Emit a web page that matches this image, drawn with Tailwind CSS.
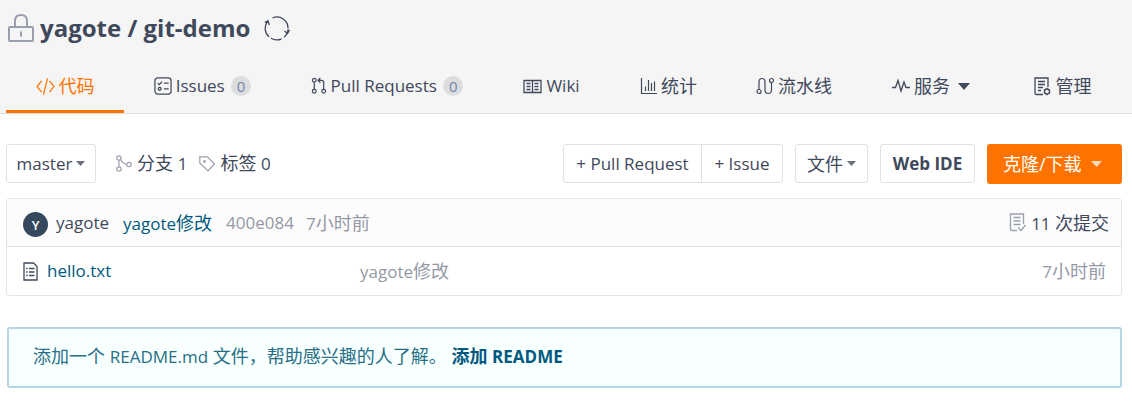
<!DOCTYPE html>
<html lang="zh-CN">
<head>
<meta charset="utf-8">
<meta name="viewport" content="width=device-width, initial-scale=1">
<title>yagote / git-demo</title>
<script src="https://cdn.jsdelivr.net/npm/@tailwindcss/browser@4"></script>
</head>
<body class="bg-white font-['Open_Sans','Noto_Sans_CJK_SC',sans-serif] text-[17px] leading-6 text-[#40485b]">
<header class="border-b border-[#dcddde] bg-[#f5f5f5] px-[6px]">
  <div class="flex h-14 items-center pl-[2px]">
    <svg class="h-7 w-[26px] shrink-0" viewBox="0 0 26 28" fill="none" stroke="#9a9fb0" stroke-width="2" aria-hidden="true"><rect x="1" y="13" width="24" height="14" rx="1"/><path d="M7 13V7Q7 1 13 1T19 7V13M13 17.500v5"/></svg>
    <h1 class="ml-[6px] text-2xl font-bold whitespace-nowrap"><a href="#">yagote</a> / <a href="#">git-demo</a></h1>
    <button type="button" class="ml-[14px]" aria-label="同步">
      <svg class="size-[26px]" viewBox="0 0 26 26" fill="none" stroke="#40485b" stroke-width="1.300" aria-hidden="true"><path d="M8.500 3A11 11 0 0 1 24 13.500M17.500 23.800A11.200 11.200 0 0 1 7 23.200M5 21.800A11.200 11.200 0 0 1 3.500 6.500M24 14.500A11 11 0 0 1 20 22.300M.8 7.500l3.200-1.700 1.300 4.200M20.500 16l3 2.500 2-3.800"/></svg>
    </button>
  </div>
  <nav class="flex h-[57px] whitespace-nowrap" aria-label="仓库">
    <a href="#" class="flex w-[118px] items-center justify-center gap-1 border-b-3 border-[#fe7300] pt-[6px] text-lg text-[#fe7300]" aria-current="page">
      <svg class="size-[19px] shrink-0" viewBox="0 0 19 19" fill="none" stroke="currentColor" stroke-width="1.200" aria-hidden="true"><path d="M5.500 4L1 9.500 5.500 15M13.500 4L18 9.500 13.500 15M11.500 1.500l-4 16"/></svg>代码</a>
    <a href="#" class="flex w-[157px] items-center justify-center gap-1 pt-[3px]">
      <svg class="size-[18px] shrink-0" viewBox="0 0 19 19" fill="none" stroke="currentColor" stroke-width="1.300" aria-hidden="true"><rect x="1" y="1" width="17" height="17" rx="3"/><path d="M4 6.500l1.500 1.500L8.500 5M10.500 6.500h5M10.500 12.500h5"/><circle cx="6" cy="12.500" r="1.500"/></svg>Issues<span class="ml-[2px] rounded-full bg-[#dcddde] px-[6px] text-[15px] leading-5 text-[#7386a5]">0</span></a>
    <a href="#" class="flex w-[212px] items-center justify-center gap-1 pt-[3px]">
      <svg class="h-[18px] w-4 shrink-0" viewBox="0 0 17 19" fill="none" stroke="currentColor" stroke-width="1.300" aria-hidden="true"><circle cx="3.500" cy="3.500" r="2"/><circle cx="3.500" cy="15" r="2"/><circle cx="13.500" cy="15" r="2"/><path d="M3.500 5.500V13M7.500 3.500H11Q13.500 3.500 13.500 6v7M10 1L7.500 3.500 10 6"/></svg>Pull Requests<span class="ml-[2px] rounded-full bg-[#dcddde] px-[6px] text-[15px] leading-5 text-[#7386a5]">0</span></a>
    <a href="#" class="flex w-[117px] items-center justify-center gap-1 pt-[3px]">
      <svg class="h-[15px] w-[19px] shrink-0" viewBox="0 0 19 15" fill="none" stroke="currentColor" stroke-width="1.300" aria-hidden="true"><path d="M1 1.500h17v12H1zM9.500 1.500v12M3.500 4.500h4M3.500 7.500h4M3.500 10.500h4M11.500 4.500h4M11.500 7.500h4M11.500 10.500h4"/></svg>Wiki</a>
    <a href="#" class="flex w-[117px] items-center justify-center gap-1 pt-[3px] text-lg">
      <svg class="h-[18px] w-[17px] shrink-0" viewBox="0 0 17 18" fill="none" stroke="currentColor" stroke-width="1.200" aria-hidden="true"><path d="M1.500 1v15.500H17M5.500 9.500V14M8.500 3v11M11.500 6v8M14.500 4.500V14"/></svg>统计</a>
    <a href="#" class="flex w-[134px] items-center justify-center gap-1 pt-[3px] text-lg">
      <svg class="size-[18px] shrink-0" viewBox="0 0 18 18" fill="none" stroke="currentColor" stroke-width="1.200" aria-hidden="true"><circle cx="3" cy="14.500" r="2"/><circle cx="15.500" cy="3.500" r="2"/><path d="M3 12.500V5Q3 1.500 6 1.500T9 5v8Q9 16.500 12.200 16.500T15.500 13V5.500"/></svg>流水线</a>
    <button type="button" class="flex w-[140px] items-center justify-center gap-1 pt-[3px] text-lg">
      <svg class="size-[18px] shrink-0" viewBox="0 0 18 18" fill="none" stroke="currentColor" stroke-width="1.300" aria-hidden="true"><path d="M0 10.500h3.500L6 3.500 9 14l3-9 2 5.500h4"/></svg>服务
      <svg class="ml-1 h-[7px] w-3" viewBox="0 0 12 7" fill="currentColor" aria-hidden="true"><path d="M0 0h12L6 7z"/></svg></button>
    <a href="#" class="flex w-[122px] items-center justify-center gap-1 pt-[3px] text-lg">
      <svg class="size-[19px] shrink-0" viewBox="0 0 19 19" fill="none" stroke="currentColor" stroke-width="1.300" aria-hidden="true"><path d="M10 17.500H3.500Q2 17.500 2 16V1h13v9M5 4.500h7M5 7.500h7M5 10.500h5M5 13.500h3"/><circle cx="14" cy="14.500" r="2.500"/><path d="M14 10.800v1.200M14 17v1.200M10.800 12.700l1 .6M16.200 15.700l1 .6M10.800 16.300l1-.6M16.200 13.300l1-.6"/></svg>管理</a>
  </nav>
</header>
<main class="px-[6px]">
  <div class="mt-[30px] flex h-10 items-start pr-1 whitespace-nowrap">
    <button type="button" class="flex h-[39px] w-[90px] items-center justify-center gap-1 rounded-[3px] border border-[#dce3e8]">master
      <svg class="h-[5px] w-[9px]" viewBox="0 0 9 5" fill="#6b7080" aria-hidden="true"><path d="M0 0h9L4.500 5z"/></svg></button>
    <a href="#" class="ml-5 flex h-[39px] items-center gap-[5px] text-lg">
      <svg class="h-[17px] w-4 shrink-0" viewBox="0 0 16 17" fill="none" stroke="#9a9fb0" stroke-width="1.200" aria-hidden="true"><circle cx="3" cy="3" r="2.200"/><circle cx="3" cy="14" r="2.200"/><circle cx="13" cy="9.500" r="2.200"/><path d="M3 5.200v6.600M4.500 4.500Q6.500 8.500 10.800 9.300"/></svg><span>分支 <span class="text-[17px]">1</span></span></a>
    <a href="#" class="ml-3 flex h-[39px] items-center gap-[5px] text-lg">
      <svg class="size-4 shrink-0" viewBox="0 0 16 16" fill="none" stroke="#9a9fb0" stroke-width="1.200" aria-hidden="true"><path d="M.8.800H8.500L15.400 8 9 15 .8 7z"/><circle cx="5.500" cy="5.500" r=".8"/></svg><span>标签 <span class="text-[17px]">0</span></span></a>
    <div class="ml-auto flex h-[39px] rounded-[3px] border border-[#dce3e8]">
      <button type="button" class="w-[138px] border-r border-[#dce3e8]">+ Pull Request</button>
      <button type="button" class="w-20">+ Issue</button>
    </div>
    <button type="button" class="ml-3 flex h-[39px] w-[73px] items-center justify-center gap-1 rounded-[3px] border border-[#dce3e8] text-lg">文件<svg class="h-[5px] w-[9px]" viewBox="0 0 9 5" fill="#6b7080" aria-hidden="true"><path d="M0 0h9L4.500 5z"/></svg></button>
    <button type="button" class="ml-3 h-[39px] w-[95px] rounded-[3px] border border-[#dce3e8] font-bold">Web IDE</button>
    <button type="button" class="ml-3 flex h-10 w-[135px] items-center gap-[9px] rounded-[3px] bg-[#fe7300] pl-4 text-lg text-white">克隆/下载<svg class="h-[6px] w-[11px]" viewBox="0 0 11 6" fill="#ffdcbf" aria-hidden="true"><path d="M0 0h11L5.500 6z"/></svg></button>
  </div>

  <section class="mt-[14px] mr-1 rounded-[4px] border border-[#dfe5ea] whitespace-nowrap" aria-label="文件列表">
    <div class="flex h-12 items-center rounded-t-[4px] border-b border-[#dce3e8] bg-[#fcfcfc] pr-3 pl-4 text-[#9599a6]">
      <span class="mt-1 flex size-[25px] items-center justify-center rounded-full bg-[#34495e] text-[13px] font-semibold text-white">Y</span>
      <a href="#" class="ml-2 text-[#40485b]">yagote</a>
      <a href="#" class="ml-[14px] text-[#005980]">yagote<span class="text-lg">修改</span></a>
      <a href="#" class="ml-[14px]">400e084</a>
      <span class="ml-3">7<span class="text-lg">小时前</span></span>
      <a href="#" class="ml-auto flex items-center gap-1 text-[#40485b]">
        <svg class="h-[19px] w-[18px]" viewBox="0 0 18 19" fill="none" stroke="#9a9fb0" stroke-width="1.300" aria-hidden="true"><path d="M8 17.500H3Q1.500 17.500 1.500 16V1h13v10M4.500 4.500h7M4.500 8h7M4.500 11.500h7M9 14.500l3 3L16.500 12"/></svg><span>11 <span class="text-lg">次提交</span></span></a>
    </div>
    <table class="w-full table-fixed text-left text-[#9599a6]">
      <tbody><tr class="h-12">
        <td class="w-[353px] pl-4"><a href="#" class="flex items-center gap-[9px] text-[#005980]">
          <svg class="h-[19px] w-[15px]" viewBox="0 0 15 19" fill="none" stroke="#40485b" stroke-width="1.300" aria-hidden="true"><path d="M1 1h9.500L14 4.500V18H1zM6 6.500h5.500M6 10h5.500M6 13.500h5.500M3.200 6.500h1.500M3.200 10h1.500M3.200 13.500h1.500"/></svg>hello.txt</a></td>
        <td><a href="#">yagote<span class="text-lg">修改</span></a></td>
        <td class="pr-[15px] text-right">7<span class="text-lg">小时前</span></td>
      </tr></tbody>
    </table>
  </section>

  <p class="mt-[31px] mr-1 ml-px flex h-[61px] items-center rounded-[3px] border-2 border-[#b4d7e2] bg-[#f8ffff] px-6 pb-[2px] text-lg whitespace-nowrap text-[#276f86]"><span>添加一个 <span class="text-[17px]">README.md</span> 文件，帮助感兴趣的人了解。 <a href="#" class="font-bold text-[#005980]">添加 <span class="text-[17px]">README</span></a></span></p>
</main>
</body>
</html>
